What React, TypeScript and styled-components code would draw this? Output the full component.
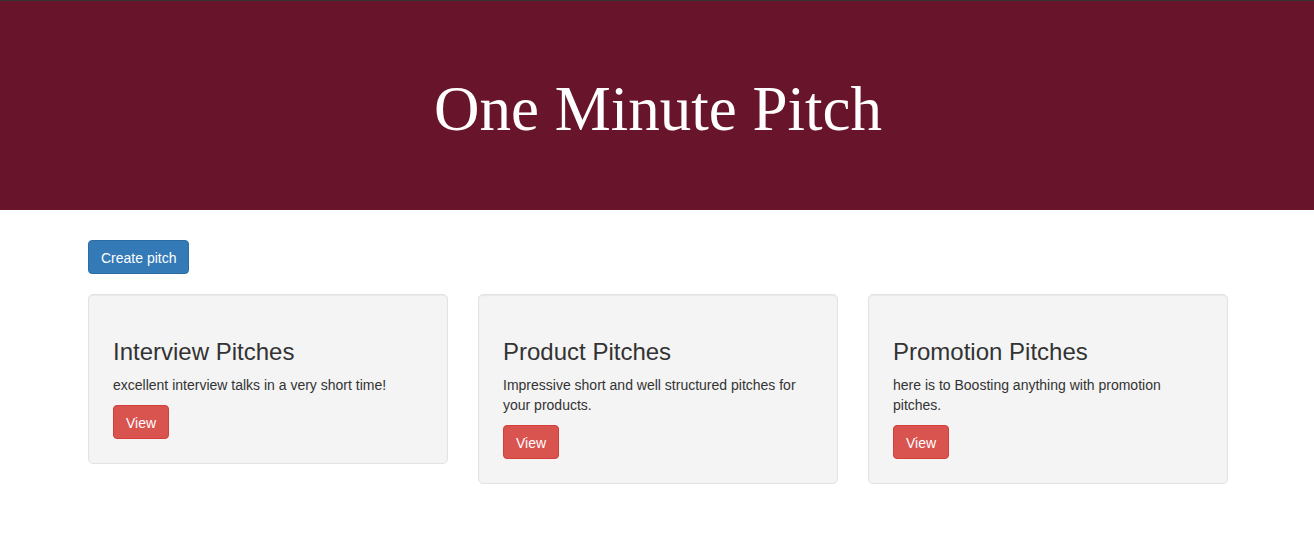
import React from "react";
import styled, { createGlobalStyle } from "styled-components";

const Global = createGlobalStyle`
  html, body { margin: 0; padding: 0; background: #fff; }
  body {
    font-family: "Liberation Sans", Arial, Helvetica, sans-serif;
    font-size: 14px;
    line-height: 1.42857;
    color: #333;
  }
  * { box-sizing: border-box; }
`;

const Header = styled.header`
  background: #68142a;
  border-top: 1px solid #333;
  height: 210px;
  padding-top: 74px;
`;

const Container = styled.div`
  width: 1170px;
  margin: 0 auto;
  padding: 0 14px 0 16px;
`;

const Title = styled.h1`
  margin: 0;
  font-family: "Liberation Serif", "Times New Roman", serif;
  font-weight: 400;
  font-size: 63px;
  line-height: 1.1;
  color: #fff;
  text-align: center;
`;

const Main = styled.main`
  padding-top: 30px;
`;

const Button = styled.a<{ $variant: "primary" | "danger" }>`
  display: inline-block;
  font-family: "Liberation Sans", Arial, sans-serif;
  font-size: 14px;
  line-height: 20px;
  padding: 6.5px 12px 5.5px;
  border-radius: 4px;
  border: 1px solid ${(p) => (p.$variant === "primary" ? "#2e6da4" : "#d43f3a")};
  background: ${(p) => (p.$variant === "primary" ? "#337ab7" : "#d9534f")};
  color: #fff;
  text-decoration: none;
  cursor: pointer;
`;

const Grid = styled.div`
  display: grid;
  grid-template-columns: repeat(3, 360px);
  column-gap: 30px;
  align-items: start;
  margin-top: 20px;
`;

const Card = styled.div`
  background: #f4f4f4;
  border: 1px solid #e3e3e3;
  border-radius: 5px;
  padding: 24px;
  box-shadow: inset 0 1px 1px rgba(0, 0, 0, 0.05);
`;

const CardTitle = styled.h3`
  margin: 20px 0 10px;
  font-size: 24px;
  font-weight: 400;
  line-height: 1.1;
  color: #333;
`;

const CardText = styled.p`
  margin: 0 0 10px;
  font-size: 14px;
  line-height: 20px;
`;

const categories = [
  { title: "Interview Pitches", text: "excellent interview talks in a very short time!" },
  { title: "Product Pitches", text: "Impressive short and well structured pitches for your products." },
  { title: "Promotion Pitches", text: "here is to Boosting anything with promotion pitches." },
];

export default function App() {
  return (
    <>
      <Global />
      <Header>
        <Container>
          <Title>One Minute Pitch</Title>
        </Container>
      </Header>
      <Main>
        <Container>
          <Button $variant="primary">Create pitch</Button>
          <Grid>
            {categories.map((c) => (
              <Card key={c.title}>
                <CardTitle>{c.title}</CardTitle>
                <CardText>{c.text}</CardText>
                <Button $variant="danger">View</Button>
              </Card>
            ))}
          </Grid>
        </Container>
      </Main>
    </>
  );
}
